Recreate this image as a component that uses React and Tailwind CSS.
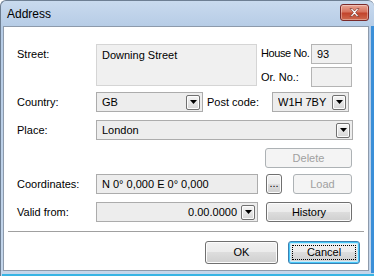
import React from 'react';

const Arrow = () => (
  <svg width="7" height="4" viewBox="0 0 7 4">
    <path d="M0 0h7L3.5 4z" fill="#000" />
  </svg>
);

const DropButton = () => (
  <div className="w-[14px] h-[15px] shrink-0 rounded-[2px] border border-[#707070] bg-[linear-gradient(#f6f6f6,#e6e6e6_50%,#d6d6d6)] flex items-center justify-center shadow-[inset_0_0_0_1px_#fcfcfc]">
    <Arrow />
  </div>
);

const Combo = ({ value, className = "" }) => (
  <div className={`h-[20px] shrink-0 border border-[#acacac] bg-[#ededed] flex items-center pl-[5px] pr-[2px] ${className}`}>
    <span className="flex-1 truncate">{value}</span>
    <DropButton />
  </div>
);

const Button = ({ label, disabled = false, className = "" }) => (
  <div
    className={`shrink-0 rounded-[3px] border flex items-center justify-center ${
      disabled
        ? 'border-[#adb2b5] bg-[#f4f4f4] text-[#a0a0a0]'
        : 'border-[#707070] bg-[linear-gradient(#f2f2f2,#ebebeb_50%,#dddddd_50%,#cfcfcf)] shadow-[inset_0_0_0_1px_#fcfcfc]'
    } ${className}`}
  >
    {label}
  </div>
);

const Label = ({ children, className = "" }) => (
  <div className={`shrink-0 whitespace-nowrap ${className}`}>{children}</div>
);

export default function App() {
  return (
    <div className="w-[374px] h-[276px] flex flex-col bg-[linear-gradient(#c9daee,#b6cce6_26px,#c4d6eb)] border-l border-t border-[#6e7f93] rounded-t-[6px] font-['Liberation_Sans',sans-serif] text-[11px] text-black overflow-hidden">
      {/* Title bar */}
      <div className="h-[25px] flex items-center justify-between pl-[6px] pr-[5px] shrink-0">
        <span className="text-[12px] text-[#000] pt-[1px]">Address</span>
        <div className="w-[29px] h-[17px] -mt-[3px] rounded-[3px] border border-[#7a2a2a] bg-[linear-gradient(#e8a493,#d7735e_45%,#c2442c_55%,#cf6a4f)] flex items-center justify-center shadow-[inset_0_0_0_1px_rgba(255,255,255,0.35)]">
          <svg width="11" height="9" viewBox="0 0 11 9">
            <path d="M1 0.5h2.2L5.5 3l2.3-2.5H10L6.6 4.5 10 8.5H7.8L5.5 6 3.2 8.5H1l3.4-4z" fill="#fff" stroke="#6b2a22" strokeWidth="0.6" />
          </svg>
        </div>
      </div>

      <div className="flex">
        {/* Client area */}
        <div className="ml-[2px] w-[366px] h-[245px] bg-white border border-[#8d9aab] flex flex-col">
          {/* Street row */}
          <div className="flex pl-[13px] mt-[17px]">
            <Label className="w-[79px] pt-[2px]">Street:</Label>
            <div className="w-[161px] h-[42px] shrink-0 border border-[#d5d5d5] bg-[#f0f0f0] pl-[5px] pt-[2px]">Downing Street</div>
            <div className="ml-[4px] flex flex-col">
              <div className="flex items-center h-[20px]">
                <Label className="w-[50px] tracking-[-0.4px] -mt-[2px]">House No.</Label>
                <div className="w-[41px] h-[20px] border border-[#b4b4b4] bg-[#f0f0f0] flex items-center pl-[5px]">93</div>
              </div>
              <div className="flex items-center h-[20px] mt-[3px]">
                <Label className="w-[50px]">Or. No.:</Label>
                <div className="w-[41px] h-[20px] border border-[#b4b4b4] bg-[#f0f0f0]" />
              </div>
            </div>
          </div>

          {/* Country row */}
          <div className="flex items-center pl-[13px] mt-[5px]">
            <Label className="w-[79px]">Country:</Label>
            <Combo value="GB" className="w-[107px]" />
            <Label className="w-[69px] pl-[4px]">Post code:</Label>
            <Combo value="W1H 7BY" className="w-[77px]" />
          </div>

          {/* Place row */}
          <div className="flex items-center pl-[13px] mt-[8px]">
            <Label className="w-[79px]">Place:</Label>
            <Combo value="London" className="w-[257px]" />
          </div>

          {/* Delete */}
          <div className="flex pl-[261px] mt-[8px]">
            <Button label="Delete" disabled className="w-[87px] h-[20px]" />
          </div>

          {/* Coordinates */}
          <div className="flex items-center pl-[13px] mt-[6px]">
            <Label className="w-[79px]">Coordinates:</Label>
            <div className="w-[162px] h-[20px] shrink-0 border border-[#acacac] bg-[#ededed] flex items-center pl-[5px]">N 0° 0,000 E 0° 0,000</div>
            <Button label="..." className="ml-[8px] w-[16px] h-[20px] leading-none pb-[2px]" />
            <Button label="Load" disabled className="ml-[11px] w-[59px] h-[20px]" />
          </div>

          {/* Valid from */}
          <div className="flex items-center pl-[13px] mt-[8px]">
            <Label className="w-[79px]">Valid from:</Label>
            <div className="w-[162px] h-[20px] shrink-0 border border-[#acacac] bg-[#ededed] flex items-center pr-[2px]">
              <span className="flex-1 text-right pr-[4px]">0.00.0000</span>
              <DropButton />
            </div>
            <Button label="History" className="ml-[8px] w-[86px] h-[20px]" />
          </div>

          {/* Separator */}
          <div className="mx-[4px] mt-[9px] h-[2px] border-t border-[#a0a0a0] border-b border-b-white" />

          {/* Dialog buttons */}
          <div className="flex justify-end pr-[8px] mt-[8px] gap-[10px]">
            <Button label="OK" className="w-[73px] h-[23px]" />
            <div className="w-[72px] h-[23px] rounded-[3px] border border-[#3c7fb1] shadow-[inset_0_0_0_1px_#48c8f8,inset_0_0_0_2px_#c6ecfc] bg-[linear-gradient(#f2f2f2,#ebebeb_50%,#dddddd_50%,#cfcfcf)] p-[3px]">
              <div className="w-full h-full border border-dotted border-black flex items-center justify-center">Cancel</div>
            </div>
          </div>
        </div>
        <div className="ml-[2px] w-[3px] h-[247px] bg-[#3b8fd8]" />
      </div>
      <div className="mt-[1px] ml-[1px] h-[3px] bg-[#37b4e4]" />
    </div>
  );
}
